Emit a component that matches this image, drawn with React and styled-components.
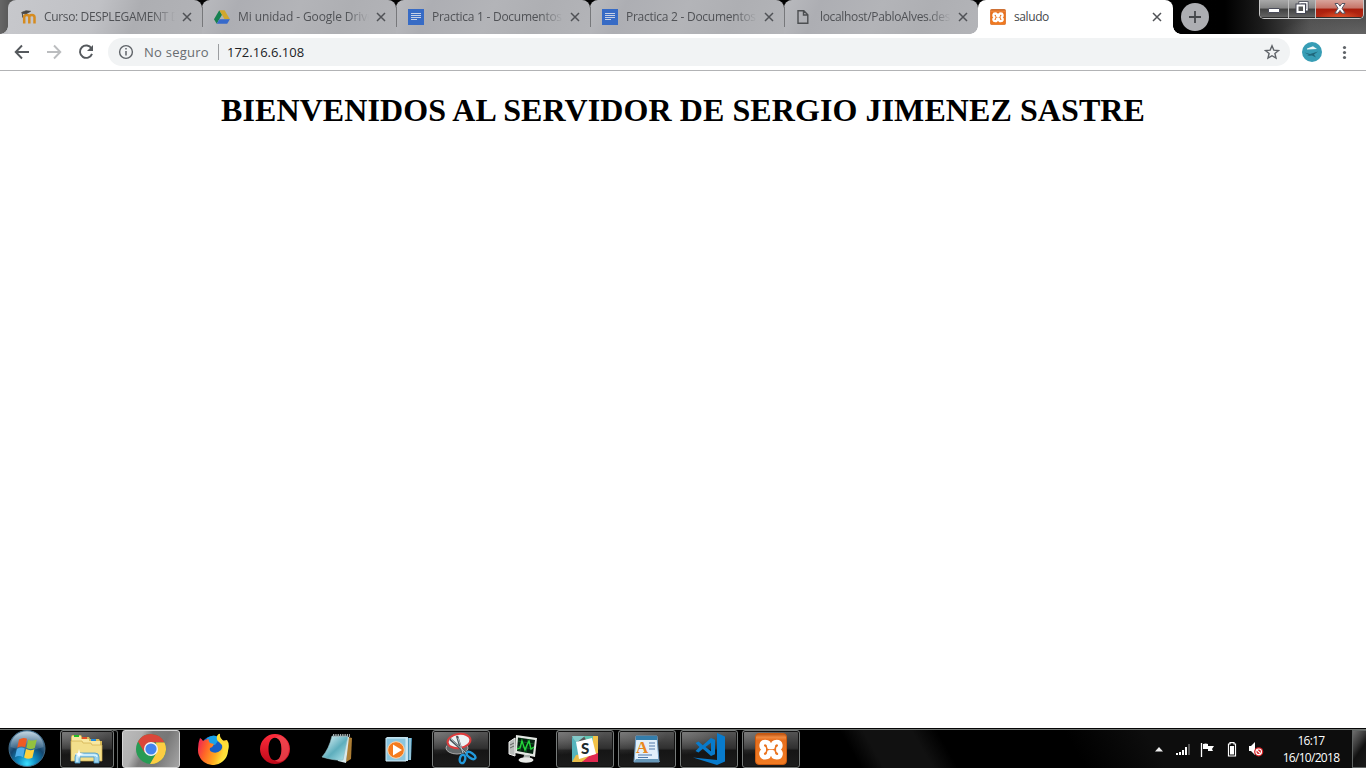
import React from 'react';
import styled, { createGlobalStyle, css } from 'styled-components';

const GlobalStyle = createGlobalStyle`
  * { box-sizing: border-box; }
  body { margin: 0; background: #fff; overflow: hidden; }
`;

const Screen = styled.div`
  width: 1366px;
  height: 768px;
  display: flex;
  flex-direction: column;
  overflow: hidden;
  font-family: 'Open Sans', 'Noto Sans', sans-serif;
`;

/* ---------- Tab strip ---------- */

const TabStrip = styled.header`
  flex: none;
  height: 34px;
  display: flex;
  padding-left: 8px;
  background:
    radial-gradient(ellipse 90px 26px at 1366px 38px, #686868, transparent),
    linear-gradient(90deg, #666 0, #5a5a5a 8px, #050505 40px, #000 1225px, #1c1c1c 1262px, #505050 1310px, #4a4a4a 1366px);
`;

const flare = css`
  content: '';
  position: absolute;
  bottom: 0;
  width: 8px;
  height: 8px;
`;

const Tab = styled.div`
  position: relative;
  flex: none;
  width: ${(p) => (p.$active ? 195 : 194)}px;
  height: 34px;
  display: flex;
  align-items: center;
  padding: 0 10px 0 12px;
  border-radius: 8px 8px 0 0;
  color: ${(p) => (p.$active ? '#45484c' : '#505256')};
  background: ${(p) => (p.$active ? '#fff' : 'linear-gradient(115deg, #b9babe 0%, #adaeb3 18%, #b3b4b8 48%, #aeafb3 72%, #b3b4b8 100%)')};
  ${(p) => p.$first && css`
    background: linear-gradient(110deg, #c7c8cc 0%, #c0c1c5 45%, #adaeb2 65%, #b2b3b7 100%);
    &::before {
      ${flare}
      left: -8px;
      background: radial-gradient(circle at 0 0, transparent 7.5px, #c2c3c7 8px);
    }
  `}
  ${(p) => p.$active && css`
    &::before {
      ${flare}
      left: -8px;
      background: radial-gradient(circle at 0 0, transparent 7.5px, #fff 8px);
    }
    &::after {
      ${flare}
      right: -8px;
      background: radial-gradient(circle at 100% 0, transparent 7.5px, #fff 8px);
    }
  `}
  ${(p) => p.$divided && css`
    &::after {
      content: '';
      position: absolute;
      right: -1px;
      top: 7px;
      width: 1px;
      height: 20px;
      background: #77787b;
      z-index: 1;
    }
  `}
`;

const Favicon = styled.span`
  flex: none;
  width: 16px;
  height: 16px;
  margin-right: 8px;
  svg { display: block; }
`;

const TabTitle = styled.span`
  flex: none;
  width: 132px;
  overflow: hidden;
  white-space: nowrap;
  font-size: 12px;
  line-height: 18px;
  letter-spacing: ${(p) => p.$track}px;
  ${(p) => !p.$plain && css`mask-image: linear-gradient(90deg, #000 108px, transparent 131px);`}
`;

const CloseIcon = styled.svg`
  flex: none;
  margin-left: 5px;
`;

const NewTab = styled.div`
  width: 28px;
  height: 28px;
  margin: 3px 0 0 8px;
  border-radius: 50%;
  background: #adaeb2;
  display: grid;
  place-items: center;
`;

const WindowControls = styled.div`
  display: flex;
  margin: 0 2px 0 auto;
  width: 105px;
  height: 19px;
  border: 1px solid #c8c8c8;
  border-top: 0;
  border-radius: 0 0 5px 5px;
  overflow: hidden;
`;

const WindowButton = styled.div`
  width: ${(p) => p.$w}px;
  display: grid;
  place-items: center;
  padding-bottom: 2px;
  border-right: 1px solid #c0c0c0;
  box-shadow: inset 0 -1px #2c2c2c;
  background: ${(p) => (p.$danger
    ? 'radial-gradient(ellipse 22px 8px at 50% 100%, #e3562c, transparent), linear-gradient(#d8a49b 0, #c67468 45%, #a81d0c 50%, #b52b15 100%)'
    : 'linear-gradient(#a9a9a9 0, #858585 45%, #414141 50%, #686868 100%)')};
  &:last-child { border-right: 0; }
`;

/* ---------- Toolbar ---------- */

const Toolbar = styled.nav`
  flex: none;
  height: 37px;
  display: flex;
  align-items: center;
  padding: 0 0 1px;
  border-bottom: 1px solid #b2b3b5;
`;

const NavIcons = styled.div`
  width: 108px;
  display: flex;
  gap: 12px;
  padding-left: 12px;
`;

const AddressBar = styled.div`
  width: 1182px;
  height: 28px;
  border-radius: 14px;
  background: #f1f3f4;
  display: flex;
  align-items: center;
  padding: 0 10px;
  font-size: 13px;
`;

const Security = styled.span`
  width: 74px;
  margin-left: 10px;
  color: #686c70;
  letter-spacing: 0.25px;
  white-space: nowrap;
`;

const Divider = styled.span`
  width: 1px;
  height: 16px;
  background: #9b9da0;
  margin-right: 8px;
`;

const Url = styled.span`
  flex: 1;
  color: #202124;
`;

const Profile = styled.div`
  margin: 0 14px 0 12px;
  height: 20px;
`;

/* ---------- Page ---------- */

const Page = styled.main`
  flex: 1;
  overflow: hidden;
  background: #fff;
`;

const Heading = styled.h1`
  margin: 21px 0 0;
  text-align: center;
  font: bold 32px/37px 'Liberation Serif', 'Times New Roman', serif;
  letter-spacing: 0.08px;
  color: #000;
`;

/* ---------- Taskbar ---------- */

const Taskbar = styled.footer`
  flex: none;
  height: 40px;
  border-top: 1px solid #050505;
  box-shadow: inset 0 1px #717572;
  display: flex;
  padding-top: 1px;
  background: linear-gradient(60deg, #000 0, #000 746px, #111 766px, #111 808px, #000 830px, #000 940px, #0d0d0d 1010px, #0d0d0d 100%);
`;

const StartButton = styled.div`
  width: 60px;
  padding: 0 0 0 8px;
`;

const Tasks = styled.div`
  display: flex;
  gap: 4px;
`;

const Task = styled.div`
  position: relative;
  width: 58px;
  height: 38px;
  display: grid;
  place-items: center;
  border-radius: 3px;
  svg { display: block; }
  ${(p) => p.$open && css`
    border: 1px solid #777b7a;
    box-shadow: inset 0 0 0 1px #121212;
    background:
      radial-gradient(ellipse 48px 24px at 0 0, rgba(140,140,140,.7), transparent),
      linear-gradient(180deg, #565656 0%, #303030 48%, #151515 54%, #1c1c1c 100%);
  `}
  ${(p) => p.$focused && css`
    border: 1px solid #d5d5d5;
    box-shadow: none;
    background: linear-gradient(115deg, #bbb 0, #b0b0b0 28%, #7c7c7c 42%, #777 65%, #a6a6a6 100%);
  `}
  ${(p) => p.$stacked && css`
    width: 54px;
    margin-right: 4px;
    &::after {
      content: '';
      position: absolute;
      top: -1px;
      right: -5px;
      width: 4px;
      height: 38px;
      border: 1px solid #626665;
      border-left: 0;
      border-radius: 0 3px 3px 0;
    }
  `}
`;

const Tray = styled.div`
  margin-left: auto;
  display: flex;
  align-items: center;
`;

const TrayIcon = styled.svg`
  margin-right: ${(p) => p.$gap}px;
`;

const Clock = styled.div`
  width: 82px;
  text-align: center;
  color: #fff;
  font-size: 12px;
  line-height: 17px;
  letter-spacing: -0.7px;
  padding-bottom: 1px;
`;

const ShowDesktop = styled.div`
  width: 14px;
  height: 38px;
  border: 1px solid #606463;
  border-right: 0;
  background: linear-gradient(125deg, #6e6e6e 0, #383838 35%, #111 55%, #1b1b1b 100%);
`;

/* ---------- Icons ---------- */

const Moodle = () => (
  <svg width="16" height="16" viewBox="0 0 16 16">
    <path d="M4.2 14.5V6.2M4.2 8q.2-2.1 2.6-2.1T9.3 8v6.5M9.3 8q0-2.1 2.6-2.1t2.6 2.3v6.3" fill="none" stroke="#d58b20" strokeWidth="2.5" />
    <path d="M1.5 3.5 6 1.8l4.6.5-4.4 2.4-3.7-.2V8.5" fill="#494745" stroke="#494745" strokeWidth=".8" />
  </svg>
);

const Drive = () => (
  <svg width="16" height="16" viewBox="0 0 16 16">
    <path d="M5.3 1.2 0 10.2l2.7 4.6L8 5.7z" fill="#168150" />
    <path d="M5.3 1.2h5.3l5.3 9h-5.3z" fill="#d1a72e" />
    <path d="m5.4 10.2-2.7 4.6h10.5l2.7-4.6z" fill="#376acb" />
  </svg>
);

const Docs = () => (
  <svg width="16" height="16" viewBox="0 0 16 16" shapeRendering="crispEdges">
    <rect width="16" height="16" rx="1" fill="#376bc5" />
    <path d="M3 4.5h10M3 6.5h10M3 8.5h10M3 10.5h6" stroke="#c7d1e5" strokeWidth="1" />
  </svg>
);

const FileIcon = () => (
  <svg width="16" height="16" viewBox="0 0 16 16">
    <path d="M2 1.7h5.8l4 4v8.6H2zM7.5 1.7v4.3h4" fill="none" stroke="#4c4e51" strokeWidth="1.4" />
  </svg>
);

const Xampp = ({ size }) => (
  <svg width={size} height={size} viewBox="0 0 32 32">
    <defs>
      <linearGradient id="xamppFace" x2="0" y2="1">
        <stop offset="0" stopColor="#b84e0c" />
        <stop offset=".12" stopColor="#f08a40" />
        <stop offset=".22" stopColor="#e76e1c" />
        <stop offset="1" stopColor="#f17b22" />
      </linearGradient>
    </defs>
    <rect x=".5" y=".5" width="31" height="31" rx="3.5" fill="url(#xamppFace)" stroke="#c95a10" />
    <path d="M10.2 9c-4 0-4.7 5-1.5 6.6v1.8c-3.5 2-2.4 6.9 1.5 6.9 3 0 4.2-2 4.2-5h3.2c0 3 1.2 5 4.2 5 4.2 0 5-4.9 1.6-6.9v-1.8C26.4 14 25.8 9 21.8 9c-3.2 0-4.2 2-4.2 5h-3.2c0-3-1-5-4.2-5z" fill="none" stroke="#fff" strokeWidth="4.6" strokeLinejoin="round" />
  </svg>
);

const Close = () => (
  <CloseIcon width="12" height="12" viewBox="0 0 12 12">
    <path d="m2 2 8 8M10 2l-8 8" stroke="#505256" strokeWidth="1.5" />
  </CloseIcon>
);

const StartOrb = () => (
  <svg width="38" height="38" viewBox="0 0 38 38">
    <defs>
      <radialGradient id="orb" cx=".5" cy=".92" r=".85">
        <stop offset="0" stopColor="#3be0ff" /><stop offset=".3" stopColor="#108bc1" />
        <stop offset=".62" stopColor="#14466e" /><stop offset="1" stopColor="#6c91ad" />
      </radialGradient>
      <linearGradient id="orbGloss" x2="0" y2="1"><stop stopColor="#d0e0ea" stopOpacity=".85" /><stop offset="1" stopColor="#6489a4" stopOpacity=".35" /></linearGradient>
    </defs>
    <circle cx="19" cy="18.5" r="18" fill="url(#orb)" stroke="#406a87" />
    <path d="M2.5 17C3 7 10 1.5 19 1.5S35 7 35.5 17c-10 4-23 4-33 0z" fill="url(#orbGloss)" />
    <path d="M11 9.5q4-2.7 8-.8l-1.8 8.6q-4-1.8-8 .4z" fill="#ee5b23" />
    <path d="M20.2 9.4q4 2.3 8.6.1l-2 8.4q-4.3 2.2-8.4-.2z" fill="#93c13f" />
    <path d="M8.8 19q4-2.5 8-.6L15 27.2q-4-2.3-8 .1z" fill="#4eaee9" />
    <path d="M18 19q4 2.2 8.4.2l-2 8.5q-4.3 2.2-8.3-.1z" fill="#ffd13d" />
  </svg>
);

const Explorer = () => (
  <svg width="34" height="32" viewBox="0 0 34 32">
    <path d="M1 4 2 2h9l1 2h7l1 2h9l1 2h2v19l-2 1H1z" fill="#d8ba58" />
    <path d="M2 3h9v3h8v2h11v4H2z" fill="#f8e8a0" />
    <path d="M4 2h5v2H4z" fill="#22bd27" /><path d="M12 4h5v2h-5z" fill="#e14f28" /><path d="M21 6h5v2h-5z" fill="#228bdd" />
    <path d="M1 8h11l1 2h8l1 2h10v16H1z" fill="#f3df8c" stroke="#cfac4c" strokeWidth=".7" />
    <path d="M5 30v-6q0-4 4-4h16q4 0 4 4v6h-5v-6H10v6z" fill="#9bd3ed" stroke="#4b99c6" strokeWidth=".8" />
    <path d="M7 29v-5q0-2 3-2h14q3 0 3 2" stroke="#d9f5ff" strokeWidth="1.3" fill="none" />
    <path d="m9 16 1 4 4 1-4 1-1 4-1-4-4-1 4-1z" fill="#fff" />
  </svg>
);

const Chrome = () => (
  <svg width="32" height="32" viewBox="0 0 32 32">
    <circle cx="16" cy="16" r="15" fill="#279b54" />
    <path d="M3 8.5A15 15 0 0 1 29.5 9.5H16L9.5 19.5z" fill="#db463a" />
    <path d="M29.5 9.5A15 15 0 0 1 15 31l7-12-1-9.5z" fill="#fdcd42" />
    <circle cx="16" cy="16" r="7" fill="#f4f4f4" /><circle cx="16" cy="16" r="5.6" fill="#4384ee" />
  </svg>
);

const Firefox = () => (
  <svg width="32" height="32" viewBox="0 0 32 32">
    <defs><linearGradient id="fox" x1="0" x2="1" y2=".3"><stop stopColor="#ed1a5c" /><stop offset=".35" stopColor="#ff6527" /><stop offset=".7" stopColor="#ffad1f" /><stop offset="1" stopColor="#fff244" /></linearGradient></defs>
    <circle cx="16" cy="15" r="12" fill="#165fc7" />
    <path d="M10 5q7-5 13 0l-5 7-8-2z" fill="#18a2e9" />
    <path d="M3 5q2 1 3 3 3-2 6-2-1 2 1 4l4 1q-1 3-4 4-1 3 2 4 5 2 9-2 3-5 0-9l6-1q3 4 1 11A15 15 0 0 1 1 16Q1 10 3 5z" fill="url(#fox)" />
    <path d="M20 3q2-3 3-2-1 4 5 8 4 5 2 11-3 8-10 9 8-5 6-14-1-4-4-6-3-2-2-6z" fill="#ffdf37" />
  </svg>
);

const Opera = () => (
  <svg width="32" height="32" viewBox="0 0 32 32">
    <defs><linearGradient id="opera" x2="0" y2="1"><stop stopColor="#ff2c3c" /><stop offset="1" stopColor="#be0818" /></linearGradient></defs>
    <path fillRule="evenodd" d="M16 1A15 15 0 1 0 16 31A15 15 0 1 0 16 1zM16 4.7c4.5 0 6.5 5 6.5 11.3S20.5 27.3 16 27.3 9.5 22.3 9.5 16 11.5 4.7 16 4.7z" fill="url(#opera)" />
    <path d="M16 4.7c6-5 14 2 14 11.3S22 32 16 27.3c4.5 0 6.5-5 6.5-11.3S20.5 4.7 16 4.7z" fill="#ef5058" opacity=".65" />
  </svg>
);

const Notepad = () => (
  <svg width="34" height="32" viewBox="0 0 34 32">
    <defs><linearGradient id="note" x2="1" y2="1"><stop stopColor="#effcff" /><stop offset=".55" stopColor="#5eaebd" /><stop offset="1" stopColor="#b5e8ef" /></linearGradient></defs>
    <path d="m28 4 4 1-1 21-5 3z" fill="#ad7e35" />
    <path d="m12 3 17 1-3 26-8-2z" fill="#d9e9eb" />
    <path d="M12 3h16l-5 24q-7 1-21-3Q9 16 12 3z" fill="url(#note)" stroke="#8cb9bf" strokeWidth=".6" />
    <path d="M13 2.5h17" stroke="#a7afb1" strokeWidth="3" strokeDasharray="1.3 1" />
  </svg>
);

const MediaPlayer = () => (
  <svg width="30" height="30" viewBox="0 0 30 30">
    <path d="M6 4h22l-1 22H6z" fill="#4b94b7" /><path d="M3 3h21v24H3z" fill="#b3d9e9" /><path d="M26 4v22M23 4v23" stroke="#d8f0f8" />
    <path d="M2 4h20v23H2z" fill="#8bc6df" stroke="#d3ebf5" />
    <circle cx="12" cy="16" r="8.3" fill="#f47b1e" stroke="#ffd5ad" /><path d="m9 10.5 9 5.5-9 5.5z" fill="#fff" />
  </svg>
);

const Snipping = () => (
  <svg width="34" height="34" viewBox="0 0 34 34">
    <ellipse cx="13" cy="16" rx="11" ry="6" fill="#65696a" stroke="#aaa" /><path d="M3 10v6h20v-6z" fill="#65696a" />
    <ellipse cx="15" cy="9" rx="11.5" ry="7" transform="rotate(-8 15 9)" fill="#edf2f3" stroke="#dc3c3c" strokeWidth="2" />
    <path d="m6 7 17 15M13 4l6 19" stroke="#4c565c" strokeWidth="2.4" /><path d="m7 7 15 14M14 6l5 15" stroke="#cad3d7" strokeWidth=".8" />
    <ellipse cx="18.5" cy="27" rx="2.7" ry="4.2" transform="rotate(12 18.5 27)" fill="none" stroke="#2299db" strokeWidth="2.4" />
    <ellipse cx="27" cy="23.5" rx="5" ry="2.5" transform="rotate(35 27 23.5)" fill="none" stroke="#2299db" strokeWidth="2.4" />
  </svg>
);

const Monitor = () => (
  <svg width="34" height="32" viewBox="0 0 34 32">
    <path d="m3 9 6-4v18l-6-2z" fill="#b8bcba" stroke="#eee" /><path d="M4 12 8 10M4 15l4-2" stroke="#626963" />
    <path d="m10 2 21 3-2 19-20-4z" fill="#e4e8e3" /><path d="m12 4.5 17 2.5-2 14-16-3z" fill="#062311" />
    <path d="M12 8l16 3M11 13l16 3M16 5l-2 13M22 6l-2 14" fill="none" stroke="#126328" strokeWidth=".8" />
    <path d="m11 16 3-1 2-7 3 9 2-5 2-4 2 8 3-2" fill="none" stroke="#24d73a" strokeWidth="1.4" />
    <path d="m18 22-1 4h7v-4z" fill="#a7afaa" /><ellipse cx="20" cy="27" rx="7.5" ry="2.8" fill="#e7e9e6" />
  </svg>
);

const Slack = () => (
  <svg width="28" height="28" viewBox="0 0 28 28">
    <path d="M1 1h13L4 9z" fill="#84c9c8" /><path d="M13 1h14v9L16 7z" fill="#61c3b0" /><path d="M1 2v25l8-6-3-13z" fill="#55b4bd" />
    <path d="M22 1h5v19l-5 1z" fill="#f3c247" /><path d="M1 27h10l12-6-3-3-15 2z" fill="#e9bd47" /><path d="M11 27h16v-9l-9 3z" fill="#e0284f" />
    <path d="m5 7 16-4 4 16-17 5z" fill="#fff" />
    <text x="10" y="19" fontFamily="Lato, sans-serif" fontSize="15" fontWeight="900" fill="#202a2c">S</text>
  </svg>
);

const Wordpad = () => (
  <svg width="28" height="32" viewBox="0 0 28 32">
    <path d="M3 3h21l2 26H1z" fill="#e2effa" stroke="#6e9abf" /><path d="M3 3h21v4H3z" fill="#347eac" />
    <path d="M3 26h22l2 3H1z" fill="#6698b9" />
    <text x="3" y="20" fontFamily="Liberation Serif, serif" fontSize="17" fontWeight="bold" fill="#e98720">A</text>
    <path d="M16 10h6M16 13h6M16 16h6M5 22h14M5 24.5h10" stroke="#527aa9" strokeWidth="1.2" />
  </svg>
);

const Code = () => (
  <svg width="34" height="34" viewBox="0 0 34 34">
    <path d="m25 1 8 3.5v25L25 33 1 25.5 25 28z" fill="#087bcc" />
    <path fillRule="evenodd" d="m3.5 11 3-1.5 4.3 3.7L19 6l4 1.8v14.4L19 24l-8.2-7.2-4.3 3.7-3-1.5 4-4zm10 4 5.5 4.3v-8.6z" fill="#087bcc" />
  </svg>
);

const tabs = [
  { title: 'Curso: DESPLEGAMENT D', icon: <Moodle />, track: -0.35 },
  { title: 'Mi unidad - Google Drive', icon: <Drive />, track: -0.1 },
  { title: 'Practica 1 - Documentos', icon: <Docs />, track: -0.26 },
  { title: 'Practica 2 - Documentos', icon: <Docs />, track: -0.26 },
  { title: 'localhost/PabloAlves.desp', icon: <FileIcon />, track: -0.34 },
  { title: 'saludo', icon: <Xampp size={16} />, track: -0.4, active: true },
];

const tasks = [
  { icon: <Explorer />, open: true, stacked: true },
  { icon: <Chrome />, open: true, focused: true },
  { icon: <Firefox /> },
  { icon: <Opera /> },
  { icon: <Notepad /> },
  { icon: <MediaPlayer /> },
  { icon: <Snipping />, open: true },
  { icon: <Monitor /> },
  { icon: <Slack />, open: true },
  { icon: <Wordpad />, open: true },
  { icon: <Code />, open: true },
  { icon: <Xampp size={32} />, open: true },
];

export default function App() {
  return (
    <Screen>
      <GlobalStyle />
      <TabStrip>
        {tabs.map((t, i) => (
          <Tab key={t.title} $active={t.active} $first={i === 0} $divided={i < 4}>
            <Favicon>{t.icon}</Favicon>
            <TabTitle $track={t.track} $plain={t.active}>{t.title}</TabTitle>
            <Close />
          </Tab>
        ))}
        <NewTab>
          <svg width="12" height="12" viewBox="0 0 12 12"><path d="M6 0v12M0 6h12" stroke="#45474a" strokeWidth="1.8" /></svg>
        </NewTab>
        <WindowControls>
          <WindowButton $w={29}>
            <svg width="14" height="16" viewBox="0 0 14 16"><rect x="1.5" y="8.5" width="11" height="4" rx=".5" fill="#fff" stroke="#4b4d5b" /></svg>
          </WindowButton>
          <WindowButton $w={27}>
            <svg width="14" height="14" viewBox="0 0 14 14">
              <path d="M5 3V1.8h7v7h-2" fill="none" stroke="#454755" strokeWidth="3" /><path d="M5 3V1.8h7v7h-2" fill="none" stroke="#fff" strokeWidth="1.4" />
              <rect x="2.5" y="4.5" width="6.5" height="6.5" fill="#555" stroke="#454755" strokeWidth="4" /><rect x="2.5" y="4.5" width="6.5" height="6.5" fill="#555" stroke="#fff" strokeWidth="2" />
            </svg>
          </WindowButton>
          <WindowButton $w={47} $danger>
            <svg width="14" height="13" viewBox="0 0 14 13"><path d="M2 1.5h3l2 2.7 2-2.7h3L9 6.3l3.2 4.9H9L7 8.4l-2 2.8H1.8L5 6.3z" fill="#fff" stroke="#555462" /></svg>
          </WindowButton>
        </WindowControls>
      </TabStrip>

      <Toolbar>
        <NavIcons>
          <svg width="20" height="20" viewBox="0 0 20 20"><path d="M17 10H4M10 3.5 3.7 10l6.3 6.5" fill="none" stroke="#55595d" strokeWidth="1.9" /></svg>
          <svg width="20" height="20" viewBox="0 0 20 20"><path d="M3 10h13M10 3.5l6.3 6.5-6.3 6.5" fill="none" stroke="#bbbdbf" strokeWidth="1.9" /></svg>
          <svg width="20" height="20" viewBox="0 0 20 20"><path d="M15.5 6.5A6.2 6.2 0 1 0 16 11.8" fill="none" stroke="#55595d" strokeWidth="1.9" /><path d="M17 3v6h-6z" fill="#55595d" /></svg>
        </NavIcons>
        <AddressBar>
          <svg width="16" height="16" viewBox="0 0 16 16"><circle cx="8" cy="8" r="6.4" fill="none" stroke="#5f6368" strokeWidth="1.4" /><path d="M8 7v4.5M8 4v1.6" stroke="#5f6368" strokeWidth="1.5" /></svg>
          <Security>No seguro</Security>
          <Divider />
          <Url>172.16.6.108</Url>
          <svg width="16" height="16" viewBox="0 0 16 16"><path d="m8 1.8 1.8 4.3 4.7.4-3.6 3 1.1 4.6L8 11.7l-4 2.4 1.1-4.6-3.6-3 4.7-.4z" fill="none" stroke="#5f6368" strokeWidth="1.4" /></svg>
        </AddressBar>
        <Profile>
          <svg width="20" height="20" viewBox="0 0 20 20"><circle cx="10" cy="10" r="10" fill="#379db5" /><path d="m5 6.5 6-2.2 4 2.7-10 .4z" fill="#f0f8f6" /><path d="M2.5 10.5 8 12l8-2.5-4 3 2 3-4-2-5 .5 2-1z" fill="#20677b" /></svg>
        </Profile>
        <svg width="16" height="16" viewBox="0 0 16 16"><g fill="#5f6368"><circle cx="8.5" cy="3.5" r="1.6" /><circle cx="8.5" cy="8.5" r="1.6" /><circle cx="8.5" cy="13.5" r="1.6" /></g></svg>
      </Toolbar>

      <Page>
        <Heading>BIENVENIDOS AL SERVIDOR DE SERGIO JIMENEZ SASTRE</Heading>
      </Page>

      <Taskbar>
        <StartButton><StartOrb /></StartButton>
        <Tasks>
          {tasks.map((t, i) => (
            <Task key={i} $open={t.open} $focused={t.focused} $stacked={t.stacked}>{t.icon}</Task>
          ))}
        </Tasks>
        <Tray>
          <TrayIcon $gap={13} width="8" height="5" viewBox="0 0 8 5"><path d="M0 4.5 4 0l4 4.5z" fill="#eee" /></TrayIcon>
          <TrayIcon $gap={9} width="15" height="12" viewBox="0 0 15 12" shapeRendering="crispEdges">
            <path d="M1 12v-2M4 12V9M7 12V7M10 12V4" stroke="#fff" strokeWidth="2" /><path d="M13 12V1" stroke="#555" strokeWidth="2" />
          </TrayIcon>
          <TrayIcon $gap={11} width="16" height="15" viewBox="0 0 16 15"><path d="M1.5 1v14" stroke="#fff" strokeWidth="1.3" /><path d="M3 2q3-1 5 0v2h6l-2 3 1 2H8V7H3z" fill="#fff" /></TrayIcon>
          <TrayIcon $gap={11} width="10" height="15" viewBox="0 0 10 15"><path d="M3 2V.7h4V2h1.5v12h-7V2z" fill="none" stroke="#fff" strokeWidth="1.2" /><path d="M3 4h4v8.5H3z" fill="#fff" /></TrayIcon>
          <TrayIcon $gap={6} width="16" height="16" viewBox="0 0 16 16">
            <path d="M1 5h2l4-4v13l-4-4H1z" fill="#fff" /><circle cx="10.7" cy="10.8" r="4.6" fill="#d92327" /><circle cx="10.7" cy="10.8" r="2.8" fill="none" stroke="#fff" strokeWidth="1.1" /><path d="m8.8 8.8 4 4" stroke="#fff" strokeWidth="1.2" />
          </TrayIcon>
          <Clock>16:17<br />16/10/2018</Clock>
          <ShowDesktop />
        </Tray>
      </Taskbar>
    </Screen>
  );
}
